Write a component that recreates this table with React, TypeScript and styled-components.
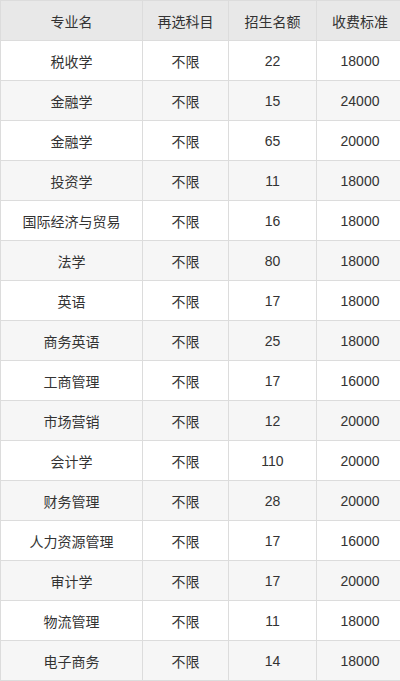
import styled, { createGlobalStyle } from 'styled-components';

const rows: [string, string, string, string][] = [
  ['税收学', '不限', '22', '18000'],
  ['金融学', '不限', '15', '24000'],
  ['金融学', '不限', '65', '20000'],
  ['投资学', '不限', '11', '18000'],
  ['国际经济与贸易', '不限', '16', '18000'],
  ['法学', '不限', '80', '18000'],
  ['英语', '不限', '17', '18000'],
  ['商务英语', '不限', '25', '18000'],
  ['工商管理', '不限', '17', '16000'],
  ['市场营销', '不限', '12', '20000'],
  ['会计学', '不限', '110', '20000'],
  ['财务管理', '不限', '28', '20000'],
  ['人力资源管理', '不限', '17', '16000'],
  ['审计学', '不限', '17', '20000'],
  ['物流管理', '不限', '11', '18000'],
  ['电子商务', '不限', '14', '18000'],
];

const GlobalStyle = createGlobalStyle`
  body {
    margin: 0;
    background: #fff;
    font-family: "Liberation Sans", "Noto Sans CJK SC", sans-serif;
    color: #333;
  }
`;

const Table = styled.table`
  width: 399px;
  border-collapse: collapse;
  table-layout: fixed;
  font-size: 14px;
`;

const HeadCell = styled.th<{ w: number }>`
  width: ${({ w }) => w}px;
  height: 39px;
  padding: 0;
  border: 1px solid #dcdcdc;
  background: #e8e8e8;
  font-weight: 400;
  text-align: center;
  color: #333;
`;

const Row = styled.tr<{ striped: boolean }>`
  background: ${({ striped }) => (striped ? '#f6f6f6' : '#fff')};
`;

const Cell = styled.td`
  height: 39px;
  padding: 0;
  border: 1px solid #dcdcdc;
  text-align: center;
  color: #333;
`;

const App = () => {
  return (
    <>
      <GlobalStyle />
      <Table>
        <thead>
          <tr>
            <HeadCell w={141}>专业名</HeadCell>
            <HeadCell w={85}>再选科目</HeadCell>
            <HeadCell w={87}>招生名额</HeadCell>
            <HeadCell w={86}>收费标准</HeadCell>
          </tr>
        </thead>
        <tbody>
          {rows.map((r, i) => (
            <Row key={i} striped={i % 2 === 1}>
              {r.map((c, j) => (
                <Cell key={j}>{c}</Cell>
              ))}
            </Row>
          ))}
        </tbody>
      </Table>
    </>
  );
};

export default App;
